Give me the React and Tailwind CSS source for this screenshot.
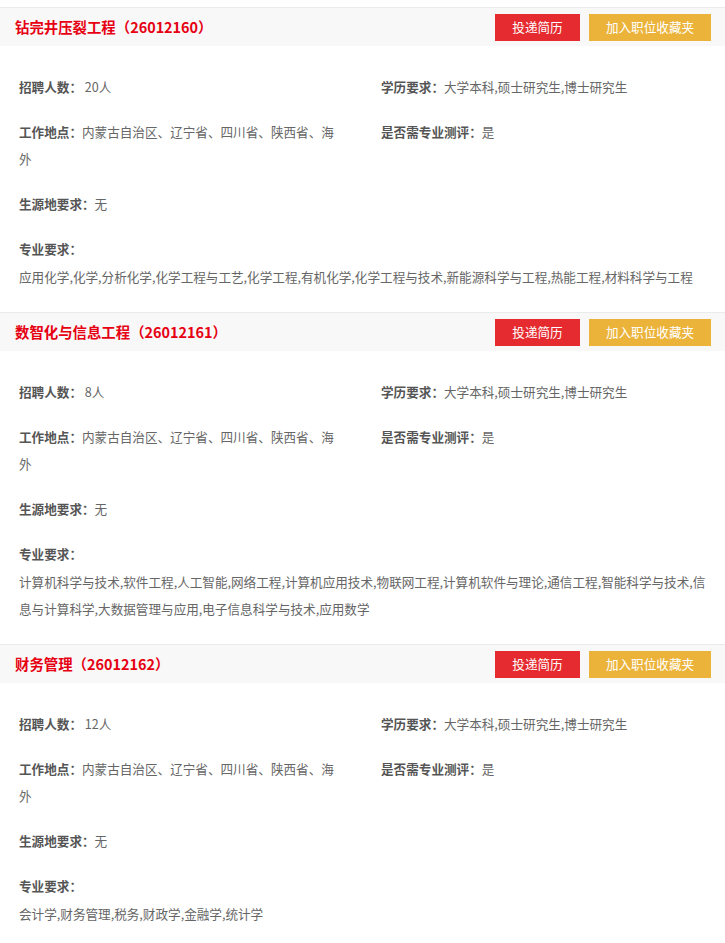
const JOBS = [
  {
    name: "钻完井压裂工程",
    code: "26012160",
    count: "20人",
    edu: "大学本科,硕士研究生,博士研究生",
    place: "内蒙古自治区、辽宁省、四川省、陕西省、海外",
    test: "是",
    origin: "无",
    major:
      "应用化学,化学,分析化学,化学工程与工艺,化学工程,有机化学,化学工程与技术,新能源科学与工程,热能工程,材料科学与工程",
  },
  {
    name: "数智化与信息工程",
    code: "26012161",
    count: "8人",
    edu: "大学本科,硕士研究生,博士研究生",
    place: "内蒙古自治区、辽宁省、四川省、陕西省、海外",
    test: "是",
    origin: "无",
    major:
      "计算机科学与技术,软件工程,人工智能,网络工程,计算机应用技术,物联网工程,计算机软件与理论,通信工程,智能科学与技术,信息与计算科学,大数据管理与应用,电子信息科学与技术,应用数学",
  },
  {
    name: "财务管理",
    code: "26012162",
    count: "12人",
    edu: "大学本科,硕士研究生,博士研究生",
    place: "内蒙古自治区、辽宁省、四川省、陕西省、海外",
    test: "是",
    origin: "无",
    major: "会计学,财务管理,税务,财政学,金融学,统计学",
  },
];

function Field({ label, children }) {
  return (
    <p className="leading-[27px] mb-[18px]">
      <b className="font-bold text-[#555]">{label}：</b>
      <span className="text-[#666]">{children}</span>
    </p>
  );
}

function JobCard({ job }) {
  return (
    <div className="pt-[7px]">
      <div className="h-[39px] border-t border-[#ebebeb] bg-[#f8f8f8] flex items-center justify-between pl-[15px] pr-[14px]">
        <h3 className="text-[14.4px] font-bold text-[#e60012]">
          {job.name}（{job.code}）
        </h3>
        <div className="flex gap-[9px]">
          <button className="w-[85px] h-[27px] bg-[#e52b2f] text-white text-[12.6px]">投递简历</button>
          <button className="w-[122px] h-[27px] bg-[#ebb33a] text-white text-[12.6px]">加入职位收藏夹</button>
        </div>
      </div>

      <div className="pt-[27px] pb-[15px] text-[12.6px]">
        <div className="flex">
          <div className="w-[362px] shrink-0 pl-[19px] pr-[22px]">
            <Field label="招聘人数">{"\u00a0" + job.count}</Field>
            <Field label="工作地点">{job.place}</Field>
            <Field label="生源地要求">{job.origin}</Field>
          </div>
          <div className="pl-[19px]">
            <Field label="学历要求">{job.edu}</Field>
            <Field label="是否需专业测评">{job.test}</Field>
          </div>
        </div>
        <div className="px-[19px]">
          <p className="leading-[27px] font-bold text-[#555]">专业要求：</p>
          <p className="mt-[1px] leading-[27px] text-[#666]">{job.major}</p>
        </div>
      </div>
    </div>
  );
}

export default function App() {
  return (
    <div
      className="w-[725px] bg-white"
      style={{ fontFamily: '"Noto Sans CJK SC", "Noto Sans", sans-serif' }}
    >
      {JOBS.map((job) => (
        <JobCard key={job.code} job={job} />
      ))}
    </div>
  );
}
